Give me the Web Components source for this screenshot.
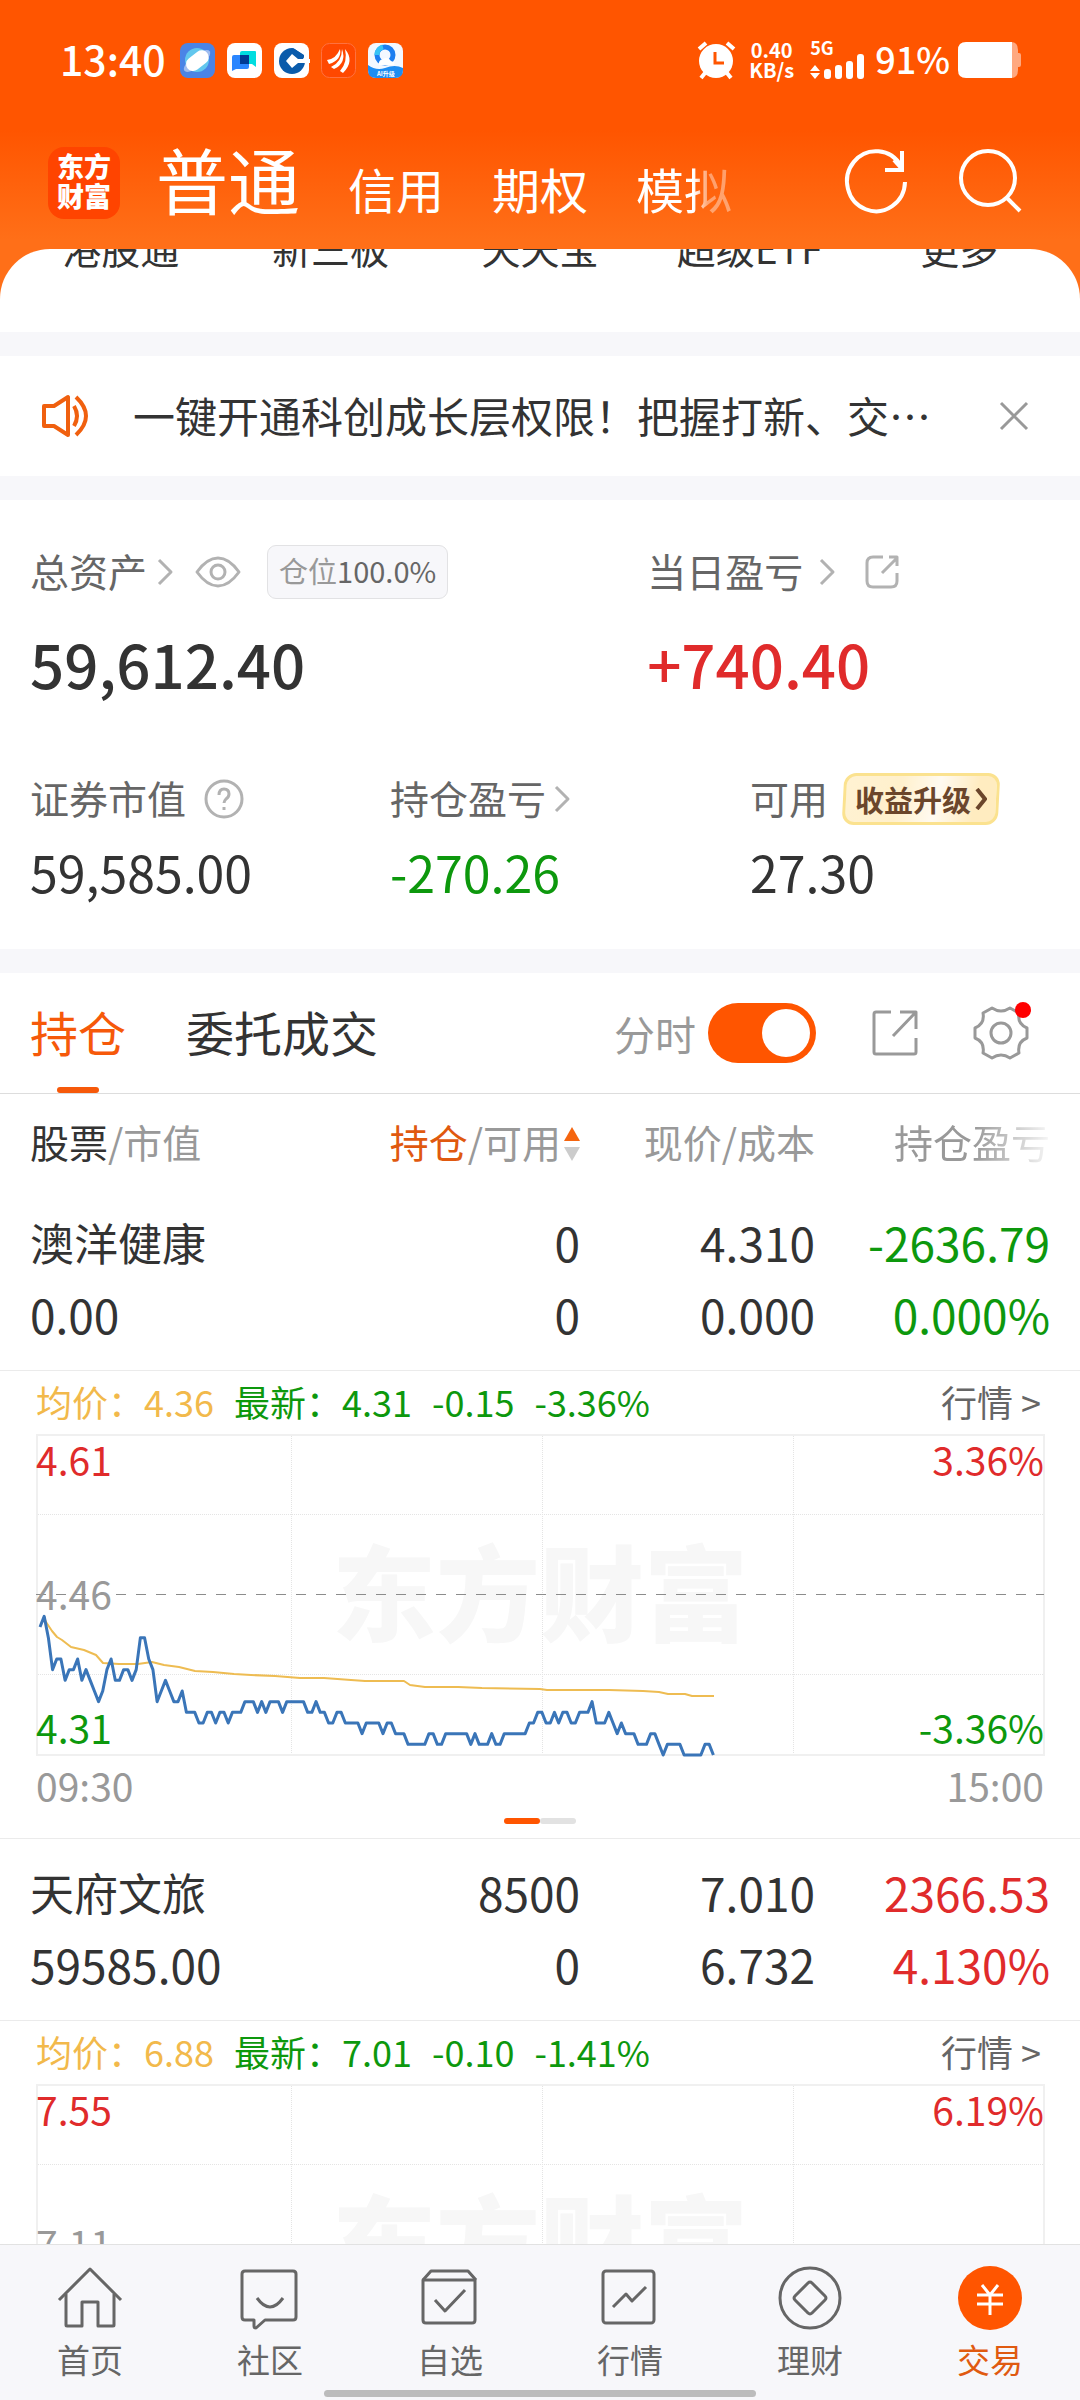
<!DOCTYPE html>
<html lang="zh-CN">
<head>
<meta charset="utf-8">
<meta name="viewport" content="width=device-width, initial-scale=1">
<title>交易</title>
<style>
  body {
    margin: 0;
    font-family: 'Noto Sans CJK SC', 'Noto Sans', sans-serif;
    color: #333;
  }
</style>
</head>
<body>
<trade-app></trade-app>

<script>
// Styles shared by every shadow root
const base = `
  :host, * { box-sizing: border-box; }
  button, a {
    font: inherit;
    color: inherit;
    background: none;
    border: 0;
    margin: 0;
    padding: 0;
    text-decoration: none;
    white-space: nowrap;
  }
  .up { color: #e02b2b; }
  .down { color: #0d980d; }
`

const define = (name, html, setup) => {
  const template = document.createElement('template')
  template.innerHTML = html
  customElements.define(name, class extends HTMLElement {
    constructor() {
      super()
      this.attachShadow({ mode: 'open' })
      this.shadowRoot.appendChild(template.content.cloneNode(true))
    }
    connectedCallback() {
      if (setup) setup(this, this.shadowRoot)
    }
  })
}

// name: [width, height, stroke width, markup]
const icons = {
  planet: [35, 35, 0, `
    <rect width="35" height="35" rx="8" fill="#4a84e6"/>
    <circle cx="17" cy="17" r="12" fill="#62c7ee"/>
    <ellipse cx="17" cy="18" rx="16" ry="6" transform="rotate(-38 17 18)" fill="#9fbdf0"/>
    <rect x="5" y="11" width="25" height="14" rx="7" transform="rotate(-38 17 18)" fill="#fff"/>`],
  chat: [35, 35, 0, `
    <rect width="35" height="35" rx="8" fill="#fff"/>
    <path d="M15 8h13q1 0 1 1v15l-4-3H13V10q0-2 2-2z" fill="#00dde0"/>
    <path d="M7 12h15v12q0 2-2 2H9l-4 2V14q0-2 2-2z" fill="#2a86ff"/>
    <path d="M13 12h9v9h-9z" fill="#003b94"/>`],
  bank: [35, 35, 0, `
    <rect width="35" height="35" rx="8" fill="#fff"/>
    <circle cx="18" cy="18" r="13" fill="#0a5bab"/>
    <path d="M18 11l6 5h12v4H24l-6 5-6-7z" fill="#fff"/>
    <path d="M19 3l13 9-2 6" fill="none" stroke="#fff" stroke-width="3"/>
    <path d="M19 5l11 7v3l-8-5z" fill="#0a5bab"/>`],
  wing: [35, 35, 0, `
    <rect x=".5" y=".5" width="34" height="34" rx="8" fill="#ff4800" stroke="#ff7140"/>
    <path d="M6 17Q15 16 19 6Q21 17 8 21zM10 24Q21 19 21 6Q26 20 13 26zM19 28Q27 19 24 6Q34 18 22 30z" fill="#fff"/>`],
  browser: [35, 35, 0, `
    <rect width="35" height="35" rx="8" fill="#f3f8ff"/>
    <path d="M0 22q8 6 17 3 10-4 18 0v2q0 8-8 8H8q-8 0-8-8z" fill="#1d8df2"/>
    <circle cx="17" cy="12" r="8" fill="none" stroke="#1b7df0" stroke-width="5"/>
    <path d="M9 12a8 8 0 0 1 6-8" fill="none" stroke="#36c3f5" stroke-width="5"/>
    <path d="M11 22q-1-5 4-6 5-3 8 2 5 1 3 4z" fill="#fff"/>
    <text x="9" y="33" font-size="6" font-weight="700" fill="#fff">AI升级</text>`],
  alarm: [37, 38, 0, `
    <circle cx="18" cy="20" r="17" fill="currentColor"/>
    <path d="M1 8l7-6M36 8l-7-6M7 32l-4 5M29 32l4 5" stroke="currentColor" stroke-width="4"/>
    <path d="M17 11v11h9" fill="none" stroke="#f50" stroke-width="3"/>`],
  signal: [55, 26, 0, `
    <path d="M5 12l5 6H0zM5 26l5-6H0z" fill="currentColor"/>
    <rect x="14" y="16" width="7" height="10" rx="3" fill="currentColor"/>
    <rect x="25" y="12" width="7" height="14" rx="3" fill="currentColor"/>
    <rect x="36" y="8" width="7" height="18" rx="3" fill="currentColor"/>
    <rect x="47" y="1" width="7" height="25" rx="3" fill="currentColor"/>`],
  battery: [64, 36, 0, `
    <path d="M52 0h1q7 0 7 8v3h1q2 0 2 2v10q0 2-2 2h-1v3q0 8-7 8h-1z" fill="#ffa87f"/>
    <path d="M8 0h46v36H8q-8 0-8-8V8q0-8 8-8z" fill="currentColor"/>`],
  refresh: [62, 64, 4, `
    <path d="M60 34A29 30 0 1 1 56 18"/><path d="M57 3v19H40" stroke-linejoin="miter"/><path d="M49 12l8 9"/>`],
  search: [62, 64, 4, `
    <circle cx="28" cy="30" r="27"/><path d="M47 50l13 13"/>`],
  speaker: [46, 42, 4, `
    <path d="M2 11h10L26 2v38l-14-9H2z"/><path d="M32 11q6 10 0 20M34 2q20 19 0 38"/>`],
  close: [28, 28, 3, `<path d="M1 1l26 26M27 1L1 27"/>`],
  chevron: [16, 26, 3, `<path d="M2 1l12 12L2 25"/>`],
  eye: [46, 32, 3, `
    <path d="M2 16Q12 2 23 2t21 14Q34 30 23 30T2 16z"/><circle cx="23" cy="16" r="7"/>`],
  help: [40, 40, 3, `
    <circle cx="20" cy="20" r="18"/><path d="M15 16q0-6 5-6t5 5q0 3-3 5-2 2-2 4"/><path d="M20 28v3"/>`],
  share: [34, 34, 3, `
    <path d="M18 2H8Q2 2 2 8v18q0 6 6 6h18q6 0 6-6v-8"/><path d="M17 18L32 3M24 2h8v9"/>`],
  export: [46, 46, 3, `
    <path d="M19 2H4Q2 2 2 4v38q0 2 2 2h38q2 0 2-2V28"/><path d="M21 26L43 3M28 2h16v17"/>`],
  gear: [54, 54, 3, `
    <path d="M18 2Q27 8 36 2L45 7Q43 18 53 22V32Q43 36 45 47L36 52Q27 46 18 52L9 47Q11 36 1 32V22Q11 18 9 7z"/>
    <circle cx="27" cy="27" r="10"/>`],
  sort: [16, 34, 0, `
    <path d="M8 0l8 14H0z" fill="#f5650f"/><path d="M8 34l8-14H0z" fill="#ccc"/>`],
  home: [64, 64, 3, `
    <path d="M1 34L32 3l31 31"/><path d="M8 28v31q0 1 1 1h15V36h16v24h15q1 0 1-1V28"/>`],
  community: [64, 64, 3, `
    <path d="M7 5h48q3 0 3 3v43q0 3-3 3H27l-9 8q-2 0-2-2v-6H7q-3 0-3-3V8q0-3 3-3z"/><path d="M19 32q13 18 26 0"/>`],
  star: [64, 64, 3, `
    <path d="M5 14h52v40q0 3-3 3H8q-3 0-3-3z"/><path d="M5 14l8-9h37l8 9"/><path d="M17 34l10 11 20-21"/>`],
  market: [64, 64, 3, `
    <rect x="5" y="5" width="51" height="52" rx="3"/><path d="M15 41l13-13 6 7 14-14"/>`],
  finance: [64, 64, 3, `
    <circle cx="32" cy="32" r="30"/><path d="M30 17q2-2 4 0l13 13q2 2 0 4L34 47q-2 2-4 0L17 34q-2-2 0-4z"/>`],
  trade: [64, 64, 3, `
    <circle cx="32" cy="32" r="32" fill="#f50" stroke="none"/>
    <path d="M24 19l8 10 8-10M32 29v20M19 29h26M19 38h26" stroke="#fff"/>`]
}

define('ui-icon', `
  <style>
    :host { display: inline-flex; flex: none; }
    svg { display: block; overflow: visible; fill: none; }
  </style>
`, (host, root) => {
  const [w, h, stroke, markup] = icons[host.getAttribute('name')]
  root.innerHTML += `
    <svg width="${w}" height="${h}" viewBox="0 0 ${w} ${h}" aria-hidden="true"
      ${stroke ? `stroke="currentColor" stroke-width="${stroke}" stroke-linejoin="round"` : ''}>${markup}</svg>`
})

define('status-bar', `
  <style>
    ${base}
    :host {
      display: flex;
      align-items: center;
      justify-content: space-between;
      height: 120px;
      padding: 0 58px 0 60px;
      color: #fff;
      font-weight: 500;
    }
    div { display: flex; align-items: center; }
    .apps { gap: 12px; }
    .time { padding-bottom: 4px; font-size: 41px; line-height: 56px; margin-right: 2px; }
    .speed {
      display: block;
      margin: 0 16px 0 14px;
      font-size: 20px;
      font-weight: 700;
      line-height: 20px;
      text-align: center;
    }
    .net {
      flex-direction: column;
      align-items: flex-start;
      margin-right: 10px;
      font-size: 18px;
      font-weight: 700;
      line-height: 12px;
    }
    .level { padding-bottom: 4px; font-size: 36px; line-height: 56px; margin-right: 8px; }
  </style>
  <div class="apps">
    <span class="time">13:40</span>
    <ui-icon name="planet"></ui-icon>
    <ui-icon name="chat"></ui-icon>
    <ui-icon name="bank"></ui-icon>
    <ui-icon name="wing"></ui-icon>
    <ui-icon name="browser"></ui-icon>
  </div>
  <div>
    <ui-icon name="alarm"></ui-icon>
    <span class="speed">0.40<br>KB/s</span>
    <div class="net">5G<ui-icon name="signal"></ui-icon></div>
    <span class="level">91%</span>
    <ui-icon name="battery"></ui-icon>
  </div>
`)

define('account-header', `
  <style>
    ${base}
    :host {
      display: flex;
      align-items: center;
      height: 129px;
      padding: 0 58px 4px 48px;
      color: #fff;
    }
    .logo {
      width: 72px;
      height: 72px;
      padding: 4px 0;
      border-radius: 16px;
      background: #ff4400;
      font-size: 27px;
      font-weight: 900;
      line-height: 30px;
      text-align: center;
    }
    nav {
      flex: 1;
      display: flex;
      align-items: baseline;
      gap: 48px;
      margin-left: 36px;
      font-size: 48px;
      line-height: 100px;
    }
    .current { font-size: 72px; }
    .fade {
      -webkit-mask-image: linear-gradient(to right, #000 60%, rgba(0, 0, 0, .4) 75%);
      mask-image: linear-gradient(to right, #000 60%, rgba(0, 0, 0, .4) 75%);
    }
    .tools { display: flex; gap: 53px; }
  </style>
  <div class="logo">东方<br>财富</div>
  <nav>
    <a class="current" href="#normal">普通</a>
    <a href="#credit">信用</a>
    <a href="#option">期权</a>
    <a class="fade" href="#paper">模拟</a>
  </nav>
  <div class="tools">
    <button aria-label="刷新"><ui-icon name="refresh"></ui-icon></button>
    <button aria-label="搜索"><ui-icon name="search"></ui-icon></button>
  </div>
`)

define('shortcut-row', `
  <style>
    ${base}
    :host {
      display: grid;
      grid-template-columns: repeat(5, 1fr);
      height: 83px;
      padding: 0 16px;
      overflow: hidden;
      background: #fff;
      text-align: center;
      font-size: 39px;
      line-height: 40px;
    }
    a { margin-top: -22px; }
  </style>
  <a href="#hk">港股通</a>
  <a href="#neeq">新三板</a>
  <a href="#ttb">天天宝</a>
  <a href="#etf">超级ETF</a>
  <a href="#more">更多</a>
`)

define('notice-bar', `
  <style>
    ${base}
    :host {
      display: flex;
      align-items: center;
      height: 120px;
      padding: 0 52px 0 42px;
      background: #fff;
      font-size: 42px;
      line-height: 60px;
    }
    ui-icon { color: #f0600f; }
    a { flex: 1; margin-left: 45px; padding-bottom: 2px; }
    button { display: flex; }
    button ui-icon { color: #999; }
  </style>
  <ui-icon name="speaker"></ui-icon>
  <a href="#notice"><slot></slot></a>
  <button aria-label="关闭"><ui-icon name="close"></ui-icon></button>
`)

define('asset-figure', `
  <style>
    ${base}
    :host { display: block; padding-left: 30px; }
    .label {
      display: flex;
      align-items: center;
      height: 56px;
      padding-bottom: 4px;
      font-size: 39px;
      line-height: 52px;
      color: #666;
      white-space: nowrap;
    }
    .value { margin-top: 12px; font-size: 50px; line-height: 64px; }
    :host([large]) .value { margin-top: 23px; font-size: 60px; line-height: 80px; font-weight: 500; }
  </style>
  <div class="label"><slot name="label"></slot></div>
  <div class="value"><slot></slot></div>
`)

define('asset-summary', `
  <style>
    ${base}
    :host { display: block; padding: 44px 0 46px; background: #fff; }
    .main { display: grid; grid-template-columns: 4fr 3fr; }
    .detail { display: grid; grid-template-columns: repeat(3, 1fr); margin-top: 68px; }
    [slot=label] { display: flex; align-items: center; gap: 10px; isolation: isolate; }
    ui-icon { margin-top: 4px; color: #b2b2b2; }
    .wide { gap: 16px; }
    .wide ui-icon[name=share] { margin-left: 14px; }
    [name=eye] { margin-left: 12px; }
    .help { gap: 18px; }
    .tight { gap: 8px; }
    .ratio {
      height: 54px;
      margin: 4px 0 0 16px;
      padding: 0 11px;
      border: 1px solid #e2e2e4;
      border-radius: 9px;
      background: #f7f7fa;
      font-size: 29px;
      line-height: 48px;
      color: #999;
    }
    .ratio b { font-weight: 400; color: #666; }
    .upgrade {
      position: relative;
      display: flex;
      align-items: center;
      gap: 4px;
      height: 52px;
      margin: 4px 0 0 4px;
      padding: 0 13px;
      font-size: 29px;
      font-weight: 700;
      line-height: 48px;
      color: #6b462b;
    }
    .upgrade::before {
      content: '';
      position: absolute;
      inset: 0 1px;
      z-index: -1;
      border: 3px solid #fbe28f;
      border-radius: 12px;
      background: linear-gradient(100deg, #fff2d2, #fff0cc 35%, #fffaf0 60%, #ffecc0 85%);
      transform: skewX(-3deg);
    }
  </style>
  <div class="main">
    <asset-figure large>
      <span slot="label">总资产<ui-icon name="chevron"></ui-icon><ui-icon name="eye"></ui-icon>
        <span class="ratio">仓位<b>100.0%</b></span></span>
      59,612.40
    </asset-figure>
    <asset-figure large>
      <span slot="label" class="wide">当日盈亏<ui-icon name="chevron"></ui-icon><ui-icon name="share"></ui-icon></span>
      <span class="up">+740.40</span>
    </asset-figure>
  </div>
  <div class="detail">
    <asset-figure>
      <span slot="label" class="help">证券市值<ui-icon name="help"></ui-icon></span>
      59,585.00
    </asset-figure>
    <asset-figure>
      <span slot="label" class="tight">持仓盈亏<ui-icon name="chevron"></ui-icon></span>
      <span class="down">-270.26</span>
    </asset-figure>
    <asset-figure>
      <span slot="label">可用
        <button class="upgrade">收益升级<svg width="12" height="22" viewBox="0 0 12 22" fill="none" stroke="currentColor" stroke-width="4"><path d="M2 1l8 10-8 10"/></svg></button></span>
      27.30
    </asset-figure>
  </div>
`)

define('position-tabs', `
  <style>
    ${base}
    :host {
      display: flex;
      align-items: center;
      height: 121px;
      padding: 0 52px 0 30px;
      border-bottom: 1px solid #ddd;
      background: #fff;
      font-size: 48px;
      line-height: 116px;
    }
    nav { flex: 1; display: flex; gap: 60px; }
    .current {
      display: flex;
      flex-direction: column;
      align-items: center;
      height: 120px;
      color: #f6590a;
    }
    .current::after {
      content: '';
      flex: none;
      width: 42px;
      height: 6px;
      margin-top: -2px;
      border-radius: 3px;
      background: #f6590a;
    }
    label { display: flex; align-items: center; gap: 12px; font-size: 41px; color: #999; }
    input {
      appearance: none;
      width: 108px;
      height: 60px;
      margin: 0;
      padding: 6px;
      border-radius: 30px;
      background: #ccc;
    }
    input::before {
      content: '';
      display: block;
      width: 48px;
      height: 48px;
      border-radius: 50%;
      background: #fff;
    }
    input:checked { background: #f50; }
    input:checked::before { margin-left: auto; }
    button { display: flex; position: relative; margin-left: 56px; color: #999; }
    .dot::after {
      content: '';
      position: absolute;
      top: -4px;
      right: -3px;
      width: 16px;
      height: 16px;
      border-radius: 50%;
      background: #f00;
    }
  </style>
  <nav>
    <a class="current" href="#position">持仓</a>
    <a href="#orders">委托成交</a>
  </nav>
  <label>分时<input type="checkbox" role="switch" checked></label>
  <button aria-label="导出"><ui-icon name="export"></ui-icon></button>
  <button class="dot" aria-label="设置"><ui-icon name="gear"></ui-icon></button>
`)

// Minute prices, in cents above the lower bound of the chart
const ticks = [
  12, 13, 11, 8, 9, 9, 7, 8, 8, 9, 7, 8, 7, 6, 5, 6, 8, 9, 7, 7, 8, 8, 7, 8, 11, 11, 9, 8, 5, 6,
  7, 6, 5, 5, 6, 4, 4, 4, 3, 3, 4, 4, 3, 4, 4, 3, 4, 4, 4, 5, 5, 5, 4, 5, 4, 5, 5, 5, 4, 5,
  5, 5, 5, 5, 4, 4, 5, 4, 4, 3, 3, 4, 4, 3, 3, 3, 3, 2, 3, 3, 3, 3, 2, 3, 3, 2, 2, 2, 1, 1,
  1, 1, 1, 2, 2, 1, 1, 2, 2, 2, 2, 2, 2, 1, 2, 1, 1, 1, 2, 1, 1, 2, 2, 2, 2, 2, 2, 3, 3, 4,
  4, 3, 3, 4, 3, 4, 4, 3, 3, 4, 4, 4, 5, 3, 3, 3, 4, 3, 2, 3, 2, 2, 2, 1, 1, 1, 2, 2, 1, 0,
  1, 1, 1, 1, 0, 0, 0, 0, 0, 1, 1, 0
]
const average = `8,183 10,188 16,197 21,203 26,206 35,213 48,216 60,221 67,229 83,230 102,230 116,228
  128,231 143,233 159,237 177,238 198,240 215,241 239,242 264,244 288,244 315,246 329,247 368,247
  374,251 389,253 422,253 446,254 504,255 511,256 573,256 607,257 623,258 632,260 649,260 656,262 678,262`

define('intraday-chart', `
  <style>
    ${base}
    :host { display: block; padding: 0 36px 14px; font-size: 39px; color: #999; }
    header { display: flex; gap: 20px; height: 63px; font-size: 36px; line-height: 60px; white-space: nowrap; }
    .avg { color: #f2b94b; }
    header a { margin-left: auto; padding-right: 3px; color: #666; }
    .plot {
      display: grid;
      grid-template: 54px 1fr 54px 1fr 54px / 1fr 1fr;
      height: 322px;
      line-height: 50px;
    }
    .plot > * { z-index: 1; }
    .plot .mark {
      grid-area: 1 / 1 / 6 / 3;
      place-self: center;
      z-index: 0;
      padding-bottom: 12px;
      font-size: 104px;
      font-weight: 900;
      line-height: 104px;
      color: #f7f7f7;
    }
    .plot svg { grid-area: 1 / 1 / 6 / 3; width: 100%; height: 322px; overflow: visible; z-index: 0; }
    .tl { grid-area: 1 / 1; }
    .tr { grid-area: 1 / 2; }
    .ml { grid-area: 3 / 1; }
    .bl { grid-area: 5 / 1; }
    .br { grid-area: 5 / 2; }
    .tr, .br { text-align: right; }
    .times { display: flex; justify-content: space-between; height: 62px; line-height: 58px; }
    .pager { display: flex; justify-content: center; }
    .pager i { width: 36px; height: 6px; border-radius: 3px; background: #e2e2e2; }
    .pager i:first-child { background: #f50; }
  </style>
  <header>
    <span class="avg">均价：<span data-attr="avg"></span></span>
    <span class="down">最新：<span data-attr="last"></span></span>
    <span class="down" data-attr="change"></span>
    <span class="down" data-attr="rate"></span>
    <a href="#quote">行情 &gt;</a>
  </header>
  <div class="plot">
    <span class="mark">东方财富</span>
    <svg viewBox="0 0 1008 322" preserveAspectRatio="none" fill="none">
      <path d="M0 80.5H1008M0 240.5H1008M255.5 0V322M506.5 0V322M757.5 0V322" stroke="#e4e4e4" stroke-dasharray="1 1"/>
      <rect x="1" y="1" width="1007" height="320" stroke="#f0f0f0" stroke-width="2"/>
      <path d="M0 160.5H1008" stroke="#8c8c8c" stroke-dasharray="10 10"/>
      <g class="lines" stroke-linejoin="round"></g>
    </svg>
    <span class="tl up" data-attr="high"></span>
    <span class="tr up" data-attr="high-rate"></span>
    <span class="ml" data-attr="mid"></span>
    <span class="bl down" data-attr="low"></span>
    <span class="br down" data-attr="low-rate"></span>
  </div>
  <div class="times"><span>09:30</span><span>15:00</span></div>
  <div class="pager"><i></i><i></i></div>
`, (host, root) => {
  root.querySelectorAll('[data-attr]').forEach(el => {
    el.textContent = host.getAttribute(el.dataset.attr)
  })
  if (host.hasAttribute('lines')) {
    const step = 1008 / 241
    const points = ticks.map((t, i) => `${4 + i * step},${321 - t * 320 / 30}`).join(' ')
    root.querySelector('.lines').innerHTML = `
      <polyline points="${average}" stroke="#eebc52" stroke-width="2"/>
      <polyline points="${points}" stroke="#3a75b8" stroke-width="3"/>`
  }
})

define('position-table', `
  <style>
    ${base}
    :host { display: block; background: #fff; }
    table { width: 100%; border-collapse: separate; border-spacing: 0; table-layout: fixed; }
    col.num { width: 235px; }
    col.last { width: 265px; }
    th, td { padding: 0; font-weight: 400; text-align: right; white-space: nowrap; }
    th:first-child, td:first-child { padding-left: 30px; text-align: left; }
    th:last-child, td:last-child { padding-right: 30px; }
    th { height: 95px; font-size: 39px; line-height: 94px; vertical-align: top; color: #999; }
    th b { font-weight: 400; color: #333; }
    th .active { color: #e0590f; }
    th button { display: flex; align-items: center; justify-content: flex-end; gap: 3px; float: right; }
    th ui-icon { margin-top: 5px; }
    .fade {
      -webkit-mask-image: linear-gradient(to right, #000 60%, rgba(0, 0, 0, .1) 88%);
      mask-image: linear-gradient(to right, #000 60%, rgba(0, 0, 0, .1) 88%);
    }
    td { font-size: 46px; line-height: 72px; }
    .name { font-size: 44px; }
    .first td { padding-top: 17px; }
    .second td { padding-bottom: 20px; }
    .chart td, .chart td:first-child { padding: 0; border-top: 1px solid #ebebeb; border-bottom: 1px solid #ebebeb; }
  </style>
  <table>
    <colgroup><col><col class="num"><col class="num"><col class="last"></colgroup>
    <thead>
      <tr>
        <th><b>股票</b>/市值</th>
        <th><button><span><b class="active">持仓</b>/可用</span><ui-icon name="sort"></ui-icon></button></th>
        <th>现价/成本</th>
        <th class="fade">持仓盈亏</th>
      </tr>
    </thead>
    <tbody>
      <tr class="first"><td class="name">澳洋健康</td><td>0</td><td>4.310</td><td class="down">-2636.79</td></tr>
      <tr class="second"><td>0.00</td><td>0</td><td>0.000</td><td class="down">0.000%</td></tr>
      <tr class="chart"><td colspan="4">
        <intraday-chart lines avg="4.36" last="4.31" change="-0.15" rate="-3.36%"
          high="4.61" high-rate="3.36%" mid="4.46" low="4.31" low-rate="-3.36%"></intraday-chart>
      </td></tr>
    </tbody>
    <tbody>
      <tr class="first"><td class="name">天府文旅</td><td>8500</td><td>7.010</td><td class="up">2366.53</td></tr>
      <tr class="second"><td>59585.00</td><td>0</td><td>6.732</td><td class="up">4.130%</td></tr>
      <tr class="chart"><td colspan="4">
        <intraday-chart avg="6.88" last="7.01" change="-0.10" rate="-1.41%"
          high="7.55" high-rate="6.19%" mid="7.11" low="6.67" low-rate="-6.19%"></intraday-chart>
      </td></tr>
    </tbody>
  </table>
`)

define('tab-bar', `
  <style>
    ${base}
    :host { display: block; flex: none; padding-bottom: 3px; border-top: 1px solid #e2e2e2; background: #f7f7fa; }
    nav { display: grid; grid-template-columns: repeat(6, 1fr); }
    a {
      display: flex;
      flex-direction: column;
      align-items: center;
      gap: 9px;
      padding: 21px 0 11px;
      font-size: 33px;
      line-height: 40px;
      color: #666;
    }
    .current { color: #e05a10; }
    .grip { width: 40%; height: 7px; margin: 0 auto; border-radius: 4px; background: #bcbcbc; }
  </style>
  <nav>
    <a href="#home"><ui-icon name="home"></ui-icon>首页</a>
    <a href="#community"><ui-icon name="community"></ui-icon>社区</a>
    <a href="#watchlist"><ui-icon name="star"></ui-icon>自选</a>
    <a href="#market"><ui-icon name="market"></ui-icon>行情</a>
    <a href="#finance"><ui-icon name="finance"></ui-icon>理财</a>
    <a class="current" href="#trade"><ui-icon name="trade"></ui-icon>交易</a>
  </nav>
  <div class="grip"></div>
`)

define('trade-app', `
  <style>
    :host {
      display: flex;
      flex-direction: column;
      height: 100vh;
      background: linear-gradient(#f50 130px, #ff6f18 240px);
    }
    status-bar, account-header { flex: none; }
    main {
      flex: 1;
      min-height: 0;
      display: flex;
      flex-direction: column;
      gap: 24px;
      overflow-y: auto;
      scrollbar-width: none;
      border-radius: 50px 50px 0 0;
      background: #f7f7fa;
    }
    main > * { flex: none; }
  </style>
  <status-bar></status-bar>
  <account-header></account-header>
  <main>
    <shortcut-row></shortcut-row>
    <notice-bar>一键开通科创成长层权限！把握打新、交…</notice-bar>
    <asset-summary></asset-summary>
    <div>
      <position-tabs></position-tabs>
      <position-table></position-table>
    </div>
  </main>
  <tab-bar></tab-bar>
`)
</script>
</body>
</html>
